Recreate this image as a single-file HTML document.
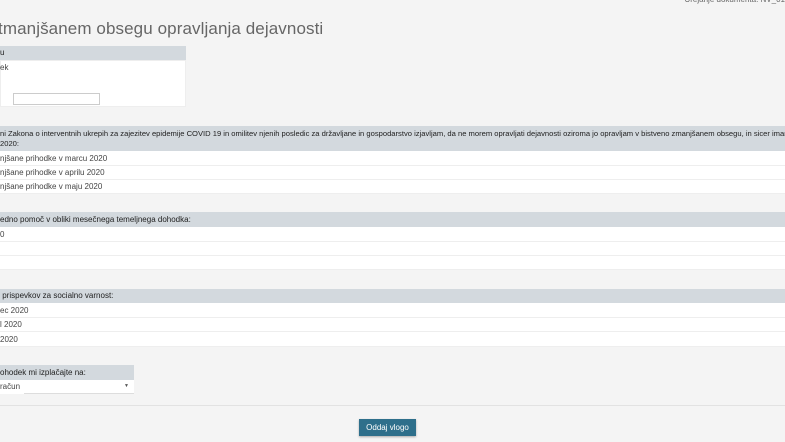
<!DOCTYPE html>
<html><head><meta charset="utf-8"><style>
body{margin:0;width:785px;height:442px;overflow:hidden;background:#f4f4f4;font-family:"Liberation Sans",sans-serif;color:#333;position:relative}
.a{position:absolute;white-space:nowrap}
.h{background:#d3d9de;font-size:8px;color:#222;overflow:hidden}
.w{background:#fff}
.r{font-size:8px;color:#444;border-bottom:1px solid #eee;box-sizing:border-box}
</style></head><body>
<div class="a" style="right:0;top:-5px;font-size:8px;color:#666">Urejanje dokumenta: NV_01</div>
<div class="a" style="left:-2px;top:19px;font-size:17px;color:#666;letter-spacing:0.1px">tmanjšanem obsegu opravljanja dejavnosti</div>
<div class="a h" style="left:0;top:46px;width:186px;height:14px;line-height:14px">u</div>
<div class="a w" style="left:0;top:60px;width:186px;height:47px;border:1px solid #eee;box-sizing:border-box"></div>
<div class="a" style="left:0;top:63px;font-size:8px;color:#444">ek</div>
<div class="a" style="left:13px;top:93px;width:87px;height:12px;border:1px solid #ccc;background:#fff;box-sizing:border-box"></div>

<div class="a h" style="left:0;top:126px;width:785px;height:25px;line-height:9.5px;padding-top:3px;box-sizing:border-box;font-size:7.6px">ni Zakona o interventnih ukrepih za zajezitev epidemije COVID 19 in omilitev njenih posledic za državljane in gospodarstvo izjavljam, da ne morem opravljati dejavnosti oziroma jo opravljam v bistveno zmanjšanem obsegu, in sicer imam v p<br>2020:</div>
<div class="a w r" style="left:0;top:151px;width:785px;height:15px;line-height:15px">njšane prihodke v marcu 2020</div>
<div class="a w r" style="left:0;top:166px;width:785px;height:14px;line-height:14px">njšane prihodke v aprilu 2020</div>
<div class="a w r" style="left:0;top:180px;width:785px;height:14px;line-height:14px">njšane prihodke v maju 2020</div>

<div class="a h" style="left:0;top:212px;width:785px;height:15px;line-height:15px">edno pomoč v obliki mesečnega temeljnega dohodka:</div>
<div class="a w r" style="left:0;top:227px;width:785px;height:15px;line-height:15px">0</div>
<div class="a w r" style="left:0;top:242px;width:785px;height:14px"></div>
<div class="a w r" style="left:0;top:256px;width:785px;height:14px"></div>

<div class="a h" style="left:0;top:289px;width:785px;height:14px;line-height:14px">&nbsp;prispevkov za socialno varnost:</div>
<div class="a w r" style="left:0;top:303px;width:785px;height:15px;line-height:15px">ec 2020</div>
<div class="a w r" style="left:0;top:318px;width:785px;height:14px;line-height:14px">l 2020</div>
<div class="a w r" style="left:0;top:332px;width:785px;height:15px;line-height:15px">2020</div>

<div class="a h" style="left:0;top:365px;width:134px;height:15px;line-height:15px">ohodek mi izplačajte na:</div>
<div class="a w" style="left:0;top:380px;width:134px;height:14px;font-size:8px;line-height:14px;color:#444">račun</div>
<div class="a" style="left:24px;top:380px;width:110px;height:14px;border-bottom:1px solid #ddd;box-sizing:border-box"></div>
<div class="a" style="left:124px;top:383px;font-size:5px;color:#555">▼</div>
<div class="a" style="left:0;top:405px;width:785px;height:1px;background:#e2e2e2"></div>
<div class="a" style="left:359px;top:419px;width:57px;height:17px;background:#2e6f8b;color:#fff;font-size:8px;line-height:17px;text-align:center;box-shadow:0 1px 2px rgba(0,0,0,.3)">Oddaj vlogo</div>
</body></html>
